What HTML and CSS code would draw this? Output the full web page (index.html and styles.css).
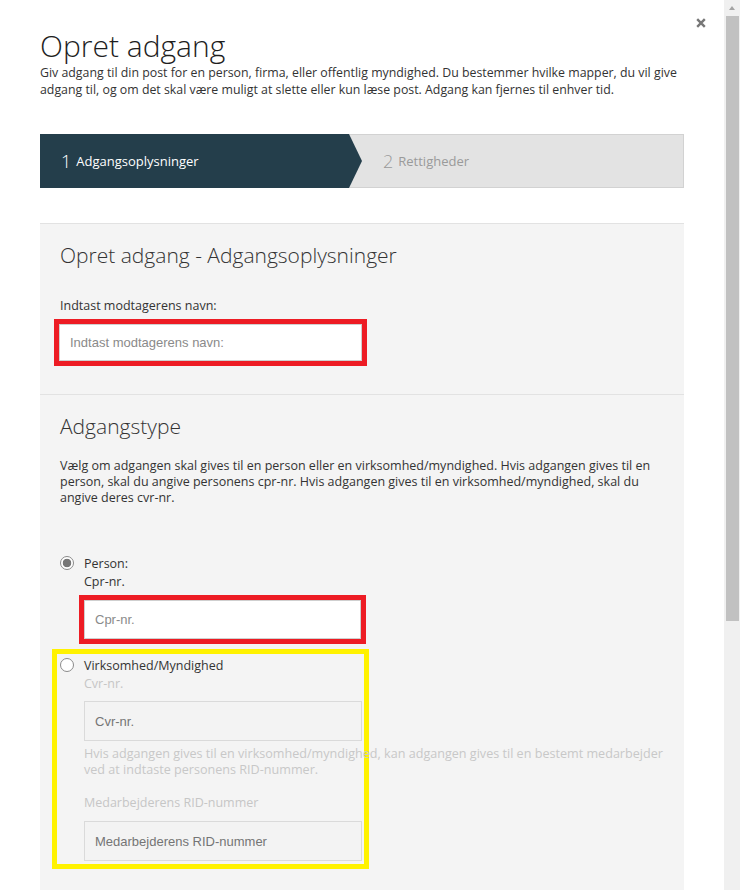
FILE: index.html
```html
<!DOCTYPE html>
<html lang="da">
<head>
    <meta charset="UTF-8">
    <meta name="viewport" content="width=device-width, initial-scale=1.0">
    <title>Opret adgang</title>
    <link rel="stylesheet" href="styles.css">
</head>
<body>
    <div class="window">
        <div class="dialog">
            <div class="dialog-head">
                <h1>Opret adgang</h1>
                <button class="close" type="button" aria-label="Luk">
                    <svg width="10" height="10" viewBox="0 0 10 10">
                        <path d="M1.2 1.2 L8.8 8.8 M8.8 1.2 L1.2 8.8" stroke="#777" stroke-width="2.4" fill="none"/>
                    </svg>
                </button>
            </div>
            <p class="intro">Giv adgang til din post for en person, firma, eller offentlig myndighed. Du bestemmer hvilke mapper, du vil give adgang til, og om det skal være muligt at slette eller kun læse post. Adgang kan fjernes til enhver tid.</p>

            <div class="steps">
                <div class="step step-active"><span class="step-num">1</span> Adgangsoplysninger</div>
                <div class="step"><span class="step-num">2</span> Rettigheder</div>
            </div>

            <div class="panel">
                <section class="panel-section">
                    <h2>Opret adgang - Adgangsoplysninger</h2>
                    <label class="field-label" for="name">Indtast modtagerens navn:</label>
                    <div class="mark mark-red">
                        <input class="text-input input-name" type="text" id="name" placeholder="Indtast modtagerens navn:">
                    </div>
                </section>

                <section class="panel-section">
                    <h2>Adgangstype</h2>
                    <p class="section-text">Vælg om adgangen skal gives til en person eller en virksomhed/myndighed. Hvis adgangen gives til en person, skal du angive personens cpr-nr. Hvis adgangen gives til en virksomhed/myndighed, skal du angive deres cvr-nr.</p>

                    <div class="options">
                        <div class="option">
                            <input class="radio" type="radio" name="type" id="person" checked>
                            <div class="option-body">
                                <label class="option-title" for="person">Person:</label>
                                <span>Cpr-nr.</span>
                                <div class="mark mark-red mark-inner">
                                    <input class="text-input input-cpr" type="text" placeholder="Cpr-nr.">
                                </div>
                            </div>
                        </div>

                        <div class="mark mark-yellow">
                            <div class="option">
                                <input class="radio" type="radio" name="type" id="company">
                                <div class="option-body">
                                    <label class="option-title" for="company">Virksomhed/Myndighed</label>
                                    <span class="muted">Cvr-nr.</span>
                                    <input class="text-input input-disabled input-cvr" type="text" placeholder="Cvr-nr." disabled>
                                    <p class="helper">Hvis adgangen gives til en virksomhed/myndighed, kan adgangen gives til en bestemt medarbejder ved at indtaste personens RID-nummer.</p>
                                    <span class="muted rid-label">Medarbejderens RID-nummer</span>
                                    <input class="text-input input-disabled input-rid" type="text" placeholder="Medarbejderens RID-nummer" disabled>
                                </div>
                            </div>
                        </div>
                    </div>
                </section>
            </div>
        </div>

        <div class="scrollbar">
            <div class="scroll-up"></div>
            <div class="scroll-thumb"></div>
        </div>
    </div>
</body>
</html>
```

FILE: styles.css
```css
body {
    margin: 0;
    font-family: "Open Sans", sans-serif;
    color: #333;
    background: #fff;
    overflow: hidden;
}

.window {
    display: flex;
    height: 890px;
}

.dialog {
    flex: 1;
    padding: 18px 40px 0;
    overflow: hidden;
}

.dialog-head {
    display: flex;
    justify-content: space-between;
    align-items: flex-start;
}

h1 {
    margin: 10px 0 0;
    font-size: 30px;
    font-weight: 300;
    line-height: 36px;
    color: #1e1e1e;
}

.close {
    width: 10px;
    height: 10px;
    margin-right: -22px;
    padding: 0;
    border: none;
    background: none;
    cursor: pointer;
}

.close svg {
    display: block;
}

.intro {
    margin: 0;
    font-size: 12.35px;
    line-height: 17px;
}

/* steps */
.steps {
    display: flex;
    height: 52px;
    margin-top: 36px;
    background: #e3e3e3;
    border: 1px solid #d2d2d2;
}

.step {
    display: flex;
    align-items: center;
    gap: 5px;
    padding-left: 21px;
    font-size: 13px;
    color: #9a9a9a;
}

.step-active {
    width: 301px;
    margin: -1px 0 -1px -1px;
    background: #243e4b;
    color: #fff;
    clip-path: polygon(0 0, calc(100% - 13px) 0, 100% 50%, calc(100% - 13px) 100%, 0 100%);
}

.step-num {
    font-size: 18px;
    font-weight: 300;
}

/* panel */
.panel {
    margin-top: 35px;
    background: #f4f4f4;
    border-top: 1px solid #e2e2e2;
    min-height: 700px;
}

.panel-section {
    padding: 17px 20px 28px;
}

.panel-section + .panel-section {
    border-top: 1px solid #e2e2e2;
}

h2 {
    margin: 0;
    font-size: 21px;
    font-weight: 300;
    line-height: 28px;
    color: #333;
}

.field-label {
    display: block;
    margin-top: 28px;
    font-size: 12.5px;
    line-height: 18px;
}

.mark {
    border: 5px solid;
}

.mark-red {
    width: fit-content;
    margin: 4px 0 0 -6px;
    border-color: #ed1c24;
}

.mark-inner {
    margin-left: -5px;
}

.mark-yellow {
    width: 304px;
    margin: 5px 0 0 -8px;
    padding: 3px 0 3px 3px;
    border-color: #fff200;
}

.text-input {
    display: block;
    box-sizing: border-box;
    width: 303px;
    height: 37px;
    margin: 0;
    padding: 0 10px;
    border: 1px solid #cfcfcf;
    background: #fff;
    font-family: "Liberation Sans", Arial, sans-serif;
    font-size: 13px;
    color: #333;
}

.text-input::placeholder {
    color: #8a8a8a;
}

.input-cpr {
    width: 277px;
    height: 39px;
}

.input-disabled {
    width: 278px;
    height: 40px;
    background: #f3f3f3;
    border-color: #dadada;
}

.input-disabled::placeholder {
    color: #757575;
}

.input-cvr {
    margin-top: 8px;
}

.input-rid {
    margin-top: 9px;
}

.section-text {
    margin: 18px 0 0;
    font-size: 12.5px;
    line-height: 16px;
}

/* options */
.options {
    margin-top: 49px;
}

.option {
    display: flex;
    align-items: flex-start;
    gap: 10px;
}

.radio {
    appearance: none;
    flex: none;
    box-sizing: border-box;
    width: 14px;
    height: 14px;
    margin: 1px 0 0;
    border: 1px solid #8a8a8a;
    border-radius: 50%;
    background: #fff;
}

.radio:checked {
    background: radial-gradient(circle, #767676 0 4px, #fff 4.6px);
}

.option-body {
    display: flex;
    flex-direction: column;
    align-items: flex-start;
    font-size: 12.5px;
    line-height: 18px;
}

.muted {
    color: #c6c6c6;
}

.helper {
    width: 590px;
    margin: 5px 0 0;
    font-size: 12.6px;
    line-height: 16px;
    color: #c8c8c8;
}

.rid-label {
    margin-top: 16px;
}

/* scrollbar */
.scrollbar {
    display: flex;
    flex-direction: column;
    align-items: center;
    width: 16px;
    background: #f0f0f0;
}

.scroll-up {
    width: 0;
    height: 0;
    margin-top: 6px;
    border-left: 3.5px solid transparent;
    border-right: 3.5px solid transparent;
    border-bottom: 4px solid #a3a3a3;
}

.scroll-thumb {
    align-self: flex-end;
    width: 13px;
    height: 605px;
    margin: 6px 1px 0 0;
    background: #c1c1c1;
}
```
